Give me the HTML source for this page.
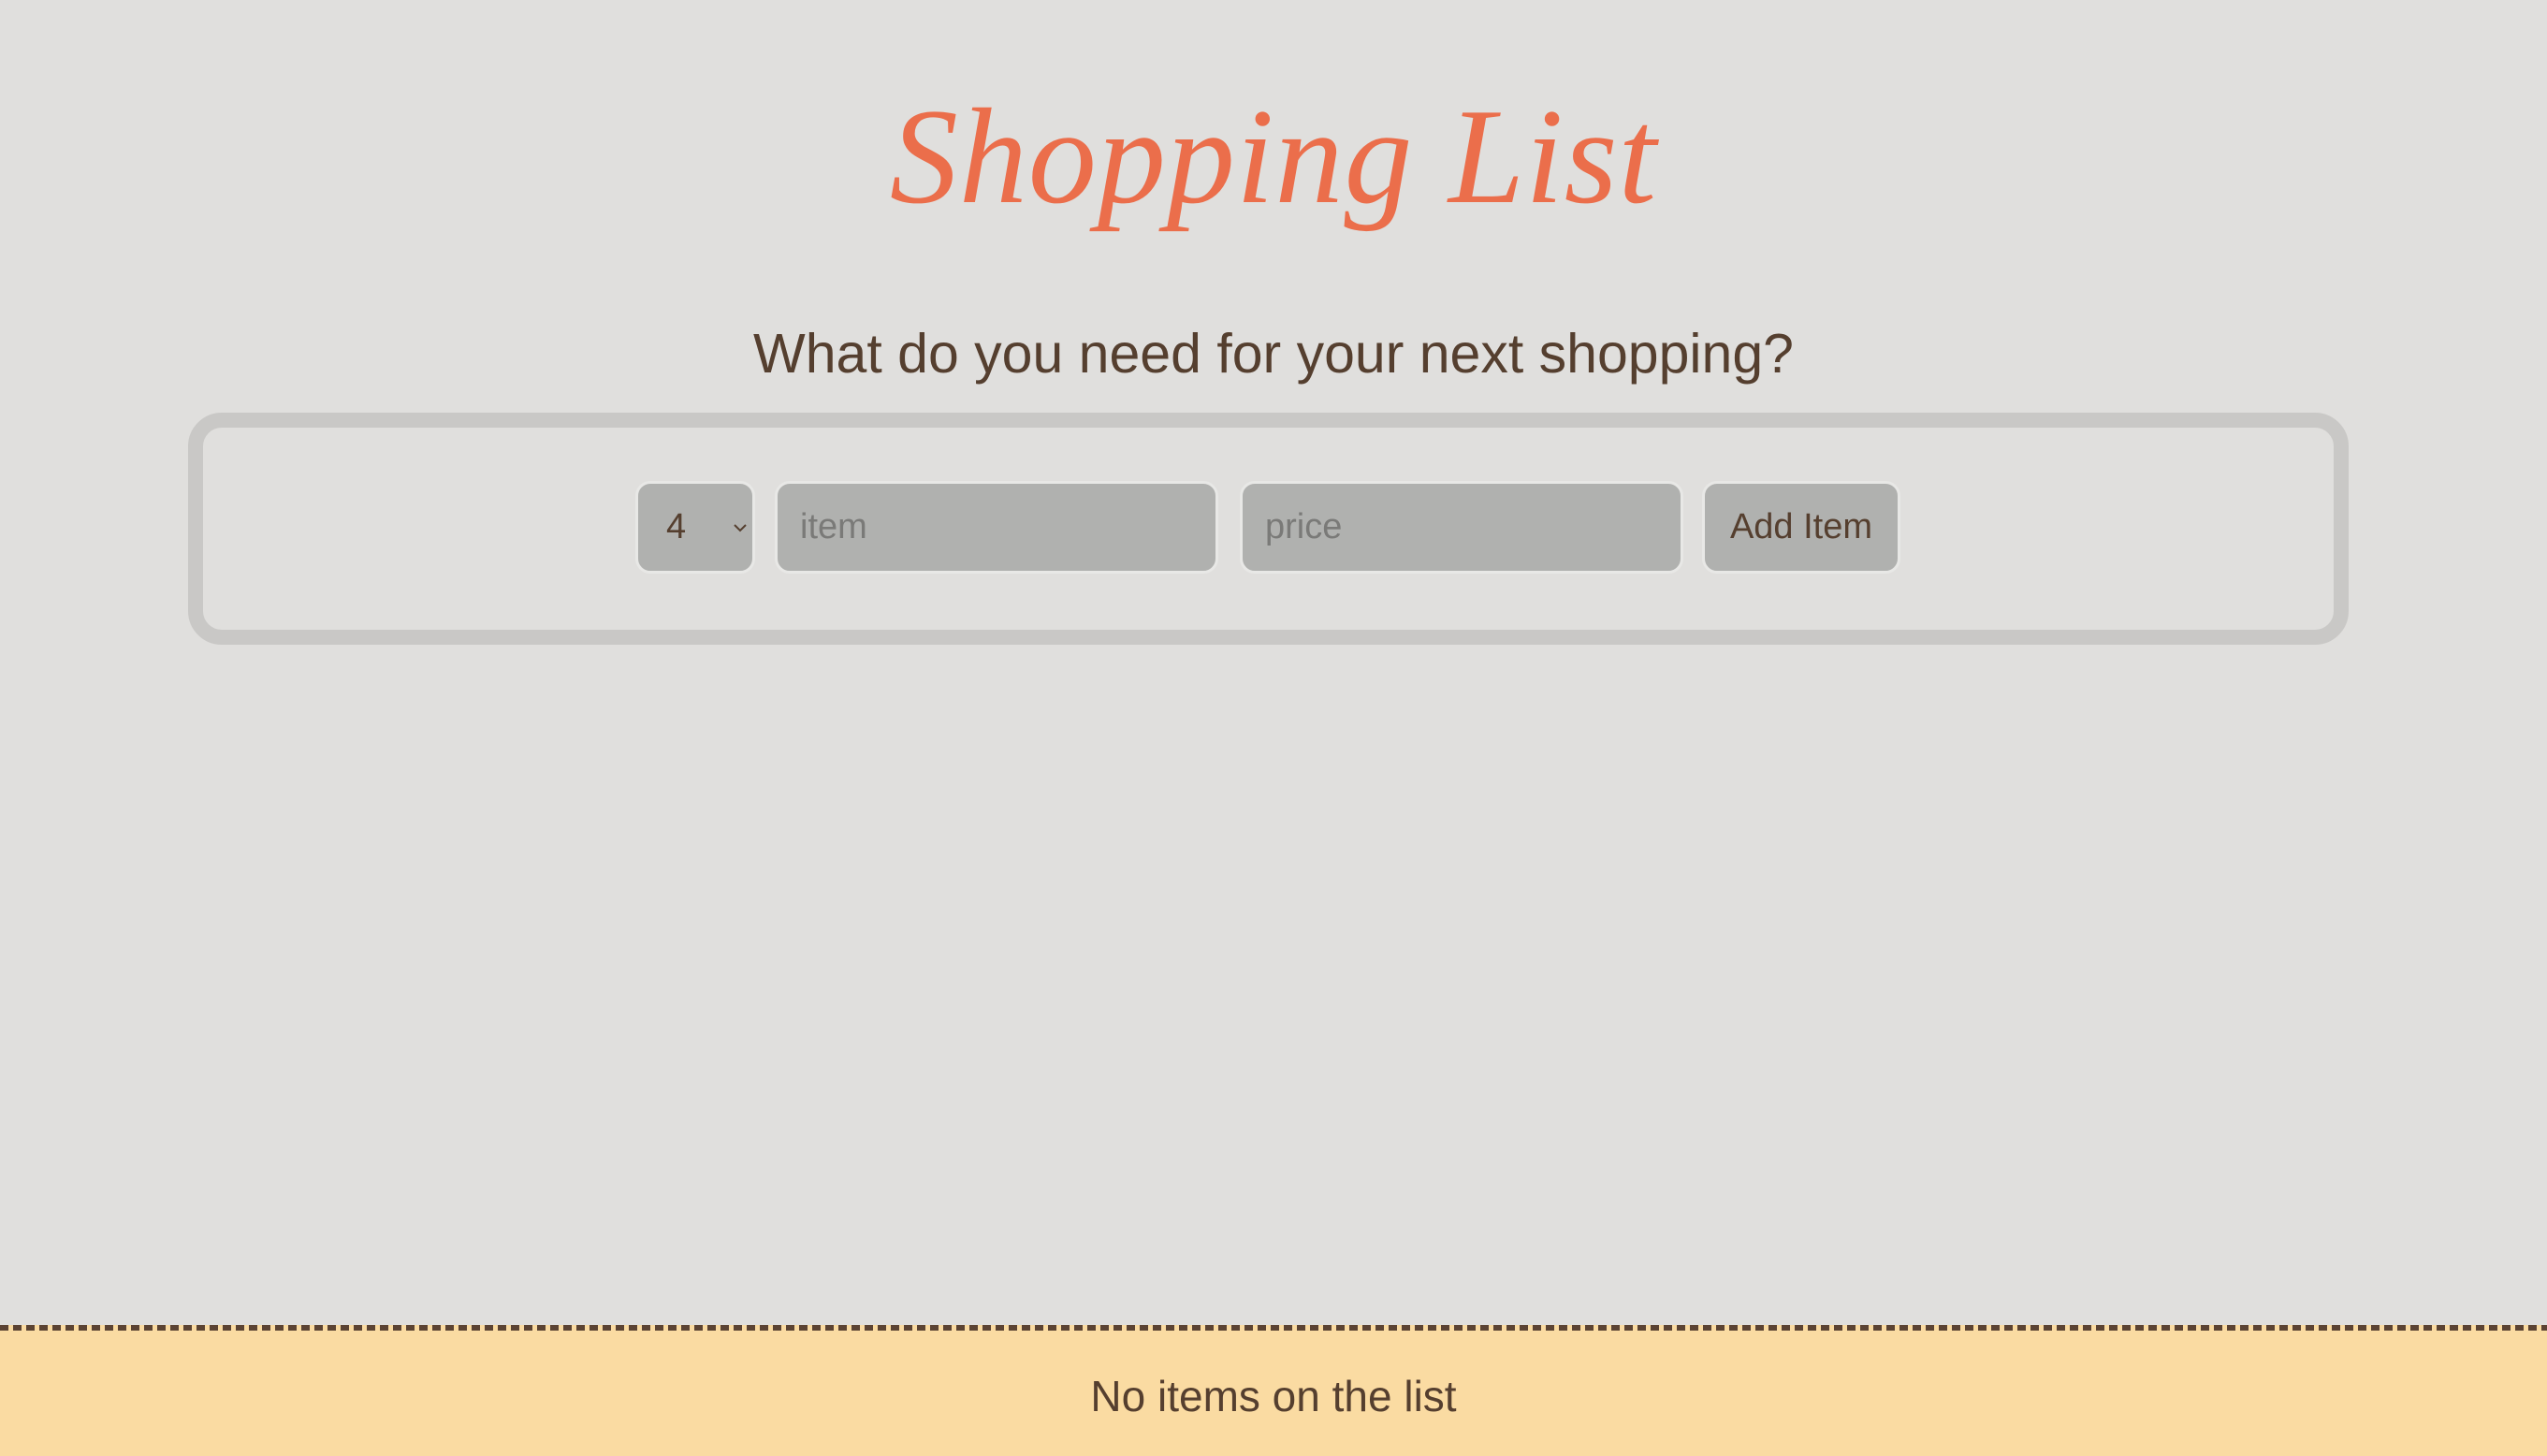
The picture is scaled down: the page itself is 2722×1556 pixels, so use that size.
<!DOCTYPE html>
<html><head><meta charset="utf-8"><style>
html,body{margin:0;padding:0;width:2722px;height:1556px;overflow:hidden;background:#e0dfdd;font-family:"Liberation Sans",sans-serif;position:relative}
.title{position:absolute;left:0;width:2722px;top:72px;text-align:center;font-family:"Liberation Serif",serif;font-style:italic;font-size:146px;line-height:190px;color:#eb6e4b;letter-spacing:1px}
.sub{position:absolute;left:0;width:2722px;top:338px;text-align:center;font-size:59px;line-height:80px;color:#553f2f}
.box{position:absolute;left:201px;top:441px;width:2277px;height:216px;border:16px solid #c9c8c6;border-radius:36px}
.f{position:absolute;top:514px;height:93px;background:#b0b1af;border:3px solid #e8e8e6;border-radius:16px;box-sizing:content-box;font-size:38px;line-height:93px}
.sel{left:679px;width:122px;color:#553f2f}
.item{left:828px;width:468px;color:#7a7a78}
.price{left:1325px;width:468px;color:#7a7a78}
.btn{left:1819px;width:206px;color:#553f2f;text-align:center}
.footer{position:absolute;left:0;top:1416px;width:2722px;height:140px;background:#fadba2}
.dash{position:absolute;left:0;top:1416px;width:2722px;height:6px;background:repeating-linear-gradient(90deg,#5b4333 0 9px,transparent 9px 14px)}
.ft{position:absolute;left:0;width:2722px;top:1462px;text-align:center;font-size:46px;line-height:60px;color:#553f2f}
</style></head><body>
<div class="title">Shopping List</div>
<div class="sub">What do you need for your next shopping?</div>
<div class="box"></div>
<div class="f sel"><span style="position:absolute;left:30px">4</span><svg style="position:absolute;left:101px;top:42px" width="16" height="10" viewBox="0 0 16 10"><path d="M2 2 L8 8 L14 2" fill="none" stroke="#553f2f" stroke-width="2"/></svg></div>
<div class="f item"><span style="position:absolute;left:24px">item</span></div>
<div class="f price"><span style="position:absolute;left:24px">price</span></div>
<div class="f btn">Add Item</div>
<div class="footer"></div>
<div class="dash"></div>
<div class="ft">No items on the list</div>
</body></html>
